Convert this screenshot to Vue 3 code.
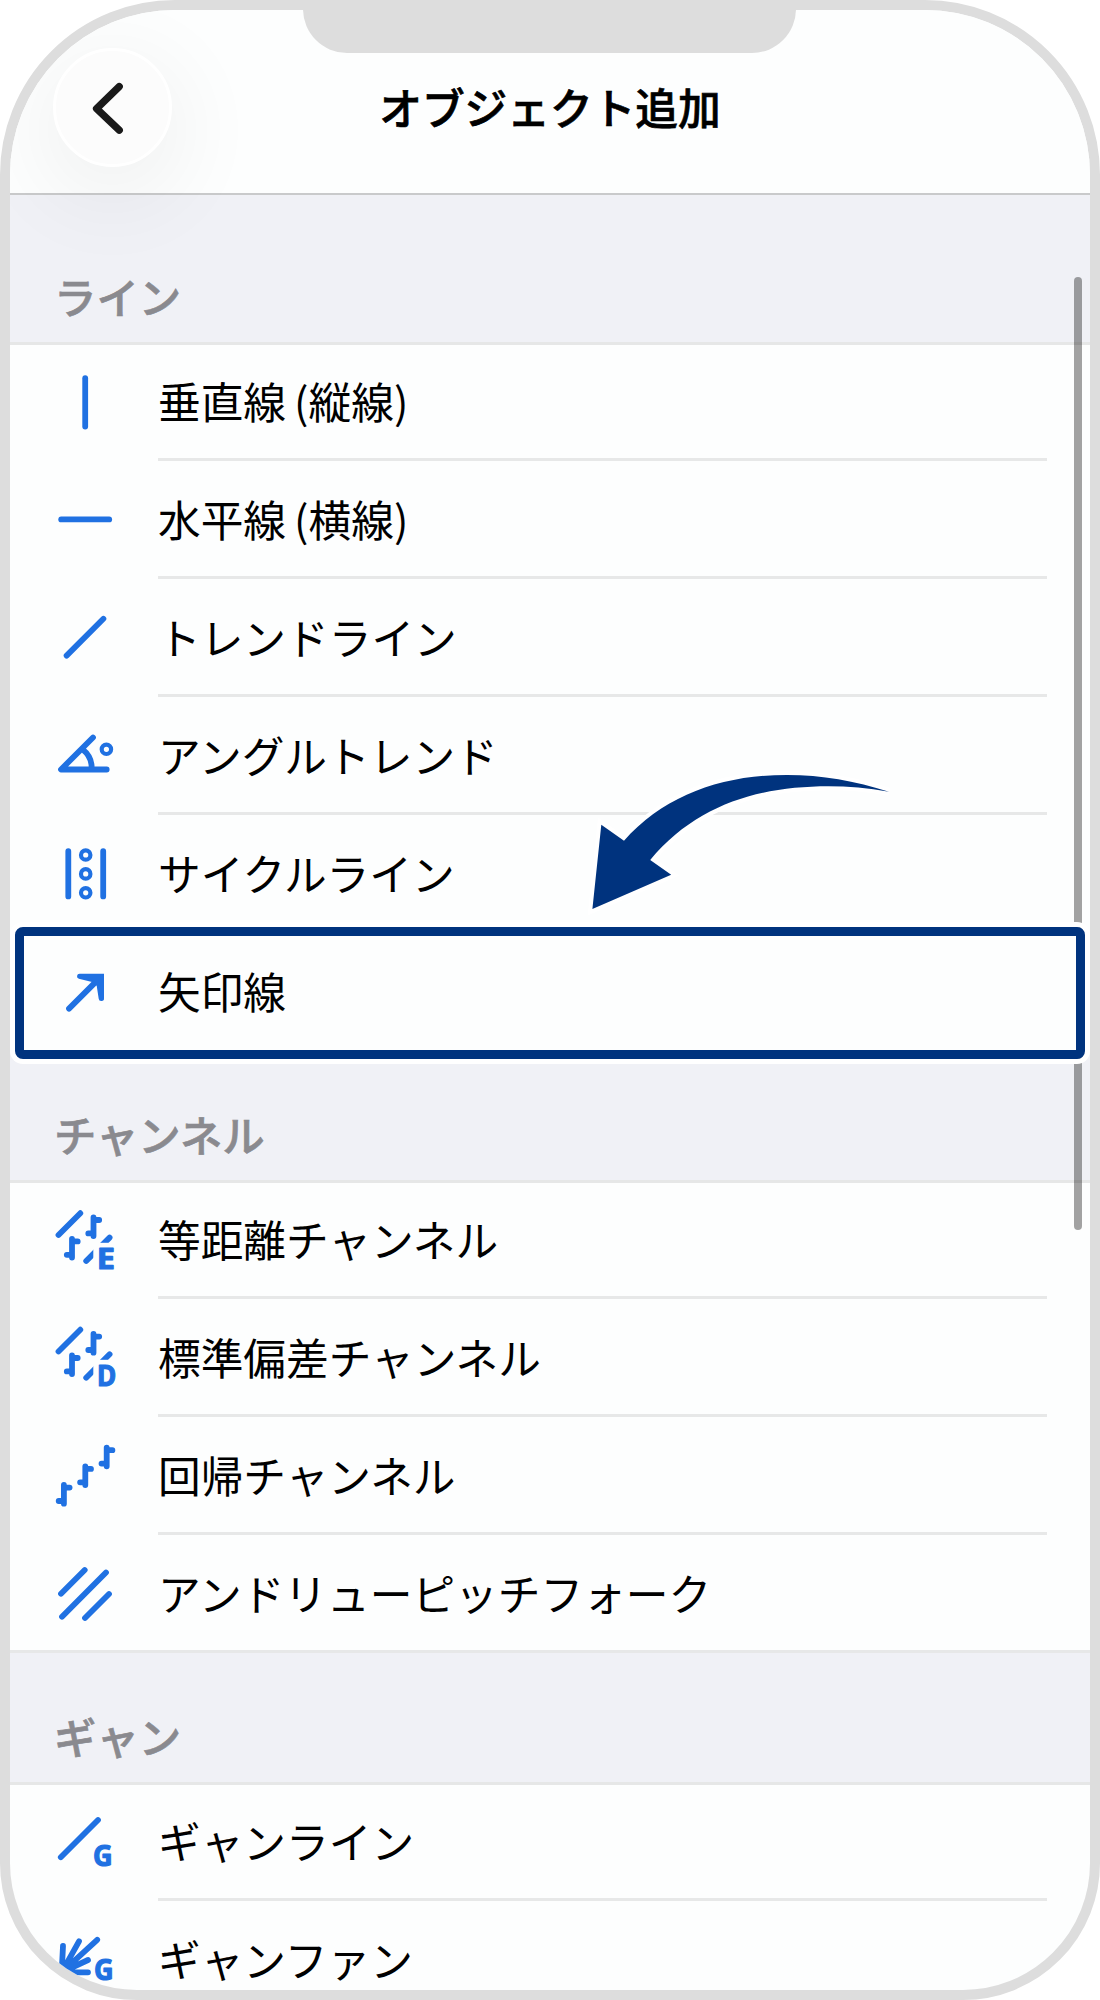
<script setup>
const candle = (x, y) =>
  `M${x} ${y}v18.7M${x} ${y + 2.6}h5.7M${x} ${y + 16}h-5.2`

const sections = [
  {
    title: 'ライン',
    items: [
      { label: '垂直線 (縦線)', d: 'M30.2 5.2V53.5' },
      { label: '水平線 (横線)', d: 'M6.2 29.4H54.2' },
      { label: 'トレンドライン', d: 'M11.6 47.6L48.4 10.8' },
      {
        label: 'アングルトレンド',
        d: 'M38 11.5L6 43.5H51.7M28.3 24Q37 31 36.7 43',
        rings: [[51.4, 23.3]],
      },
      {
        label: 'サイクルライン',
        d: 'M13.3 7.2V52.4M48.2 7.2V52.4',
        rings: [[30.7, 11], [30.7, 29.9], [30.7, 48.8]],
      },
      {
        label: '矢印線',
        d: 'M14 46.6L41 19.6',
        fill: 'M24.6 11.7H49V36.2A2.65 2.65 0 0 1 43.7 36.7L41.7 23.7L37 20L23.9 16.8A2.6 2.6 0 0 1 24.6 11.7Z',
        marked: true,
      },
    ],
  },
  {
    title: 'チャンネル',
    items: [
      {
        label: '等距離チャンネル',
        d: `M3.5 24L25.3 2.2${candle(17, 27.8)}${candle(38.5, 6.4)}M31.2 50L54.6 26.6`,
        letter: { t: 'E', x: 41.8, y: 58, w: 18.2 },
        cut: true,
      },
      {
        label: '標準偏差チャンネル',
        d: `M3.5 23.5L25.3 1.7${candle(17, 27.4)}${candle(38.5, 6)}M31.2 49.7L54.6 26.3`,
        letter: { t: 'D', x: 42, y: 57.7, w: 19.2 },
        cut: true,
      },
      {
        label: '回帰チャンネル',
        d: candle(8.9, 39) + candle(30.3, 20.3) + candle(51.7, 1.6),
      },
      {
        label: 'アンドリューピッチフォーク',
        d: 'M6 29.7L29.7 6M7 52.7L51 8.5M30 54L54 30',
      },
    ],
  },
  {
    title: 'ギャン',
    items: [
      {
        label: 'ギャンライン',
        d: 'M5.8 44.2L43 7',
        letter: { t: 'G', x: 37.9, y: 53.2, w: 19.6 },
      },
      {
        label: 'ギャンファン',
        d: 'M6.7 42.3L8 16M6.7 42.3L24 11.3M6.7 42.3L42.2 9.8M6.7 42.3L33 30M6.7 42.3H33',
        letter: { t: 'G', x: 39, y: 49.5, w: 19.6 },
      },
    ],
  },
]
</script>

<template>
  <div class="phone">
    <header class="bar">
      <button class="back" aria-label="戻る">
        <svg width="40" height="60" viewBox="0 0 40 60">
          <path d="M27.2 8.6L4.6 30.6L27.2 52.2" />
        </svg>
      </button>
      <h1>オブジェクト追加</h1>
    </header>

    <section v-for="s in sections" :key="s.title">
      <h2>{{ s.title }}</h2>
      <ul>
        <li v-for="i in s.items" :key="i.label" :class="{ marked: i.marked }">
          <svg class="icon" width="60" height="60" viewBox="0 0 60 60">
            <path class="stroke" :d="i.d" />
            <path v-if="i.fill" class="solid" :d="i.fill" />
            <circle v-for="(r, n) in i.rings || []" :key="n" class="ring" :cx="r[0]" :cy="r[1]" r="4.7" />
            <rect v-if="i.cut" class="cut" x="38.3" y="31.8" width="22" height="29" />
            <text
              v-if="i.letter"
              :x="i.letter.x"
              :y="i.letter.y"
              :textLength="i.letter.w"
              lengthAdjust="spacingAndGlyphs"
            >{{ i.letter.t }}</text>
          </svg>
          <span class="label">{{ i.label }}</span>
          <div v-if="i.marked" class="marker"></div>
        </li>
      </ul>
    </section>

    <div class="scroll"></div>
    <div class="notch"></div>
    <svg class="pointer" width="310" height="150" viewBox="585 765 310 150">
      <path
        d="M592.4 909L601.3 824.7L624 840.7C665 795 722 775 787 775C822 775 855 781 889 791.7C868 788 848 786.3 828.6 786.3C760 786.3 697 804 650.2 860L671.2 874.7Z"
      />
    </svg>
  </div>
</template>

<style>
body {
  background: #fff;
}
</style>

<style scoped>
.phone {
  position: relative;
  box-sizing: border-box;
  width: 1100px;
  height: 2000px;
  border: 10px solid #ddd;
  border-radius: 175px 175px 137px 137px;
  overflow: hidden;
  background: #fdfefe;
  color: #000;
  font-family: 'Noto Sans CJK JP', sans-serif;
}

.bar {
  display: grid;
  grid-template-columns: 162px 1fr 162px;
  align-items: center;
  box-sizing: border-box;
  height: 185px;
  padding-top: 12px;
  border-bottom: 2px solid #c9cacb;
  background: #fdfefe;
}

.back {
  position: relative;
  z-index: 1;
  box-sizing: border-box;
  width: 119px;
  height: 119px;
  margin-left: 43px;
  padding: 0;
  border: 3px solid #fff;
  border-radius: 50%;
  background: #fcfcfc;
  box-shadow: 0 22px 90px 12px rgba(0, 20, 10, 0.055);
}

.back svg {
  display: block;
  margin: 0 auto 0 36px;
}

.back path {
  fill: none;
  stroke: #1a1a1a;
  stroke-width: 7.4;
  stroke-linecap: round;
  stroke-linejoin: round;
}

h1 {
  margin: -3px 0 0;
  font-size: 42.7px;
  font-weight: 500;
  line-height: 60px;
  text-align: center;
  -webkit-text-stroke: 0.7px #000;
}

h2 {
  display: flex;
  align-items: flex-end;
  box-sizing: border-box;
  height: 132px;
  margin: 0;
  padding: 0 44px 16px;
  border-bottom: 3px solid #e6e7e7;
  background: #f0f1f6;
  color: #8a8a8f;
  font-size: 42.4px;
  font-weight: 500;
  line-height: 60px;
  -webkit-text-stroke: 0.7px #8a8a8f;
}

section:first-of-type h2 {
  height: 150px;
}

ul {
  margin: 0;
  padding: 0;
  list-style: none;
}

li {
  position: relative;
  display: flex;
  align-items: center;
  height: 118px;
  padding-left: 45px;
}

li:first-child {
  height: 116px;
}

.icon {
  flex: none;
  margin-right: 43px;
  overflow: visible;
}

.stroke {
  fill: none;
  stroke: #2071e2;
  stroke-width: 5.8;
  stroke-linecap: round;
  stroke-linejoin: round;
}

.solid {
  fill: #2071e2;
}

.ring {
  fill: none;
  stroke: #2071e2;
  stroke-width: 4.2;
}

.cut {
  fill: #fdfefe;
}

.icon text {
  fill: #2071e2;
  stroke: #2071e2;
  stroke-width: 1.1;
  stroke-linejoin: round;
  font: 700 28.6px 'Noto Sans', sans-serif;
}

.label {
  flex: 1;
  box-sizing: border-box;
  height: 100%;
  margin-right: 43px;
  border-bottom: 3px solid #e7e8e8;
  font-size: 42.7px;
  line-height: 114px;
  white-space: nowrap;
  word-spacing: -1.5px;
}

li:first-child .label {
  line-height: 110px;
}

li:last-child .label {
  margin-right: 0;
  border-bottom: 0;
}

li:last-child:not(.marked) {
  box-shadow: inset 0 -3px #e7e8e8;
}

li.marked {
  z-index: 2;
  background: #fdfefe;
}

li.marked .label {
  line-height: 115px;
}

.marker {
  position: absolute;
  top: -6px;
  left: 5px;
  box-sizing: border-box;
  width: 1070px;
  height: 132px;
  border: 9px solid #00337e;
  border-radius: 8px;
  box-shadow: 0 0 0 5px #fff;
}

.scroll {
  position: absolute;
  top: 267px;
  left: 1064px;
  width: 8px;
  height: 953px;
  border-radius: 4px;
  background: rgba(0, 0, 0, 0.36);
}

.notch {
  position: absolute;
  top: -1px;
  left: 293px;
  width: 493px;
  height: 44px;
  border-radius: 0 0 45px 45px;
  background: #ddd;
}

.pointer {
  position: absolute;
  z-index: 3;
  top: 755px;
  left: 575px;
  overflow: visible;
}

.pointer path {
  fill: #00337e;
  stroke: #fff;
  stroke-width: 8;
  paint-order: stroke;
}
</style>
